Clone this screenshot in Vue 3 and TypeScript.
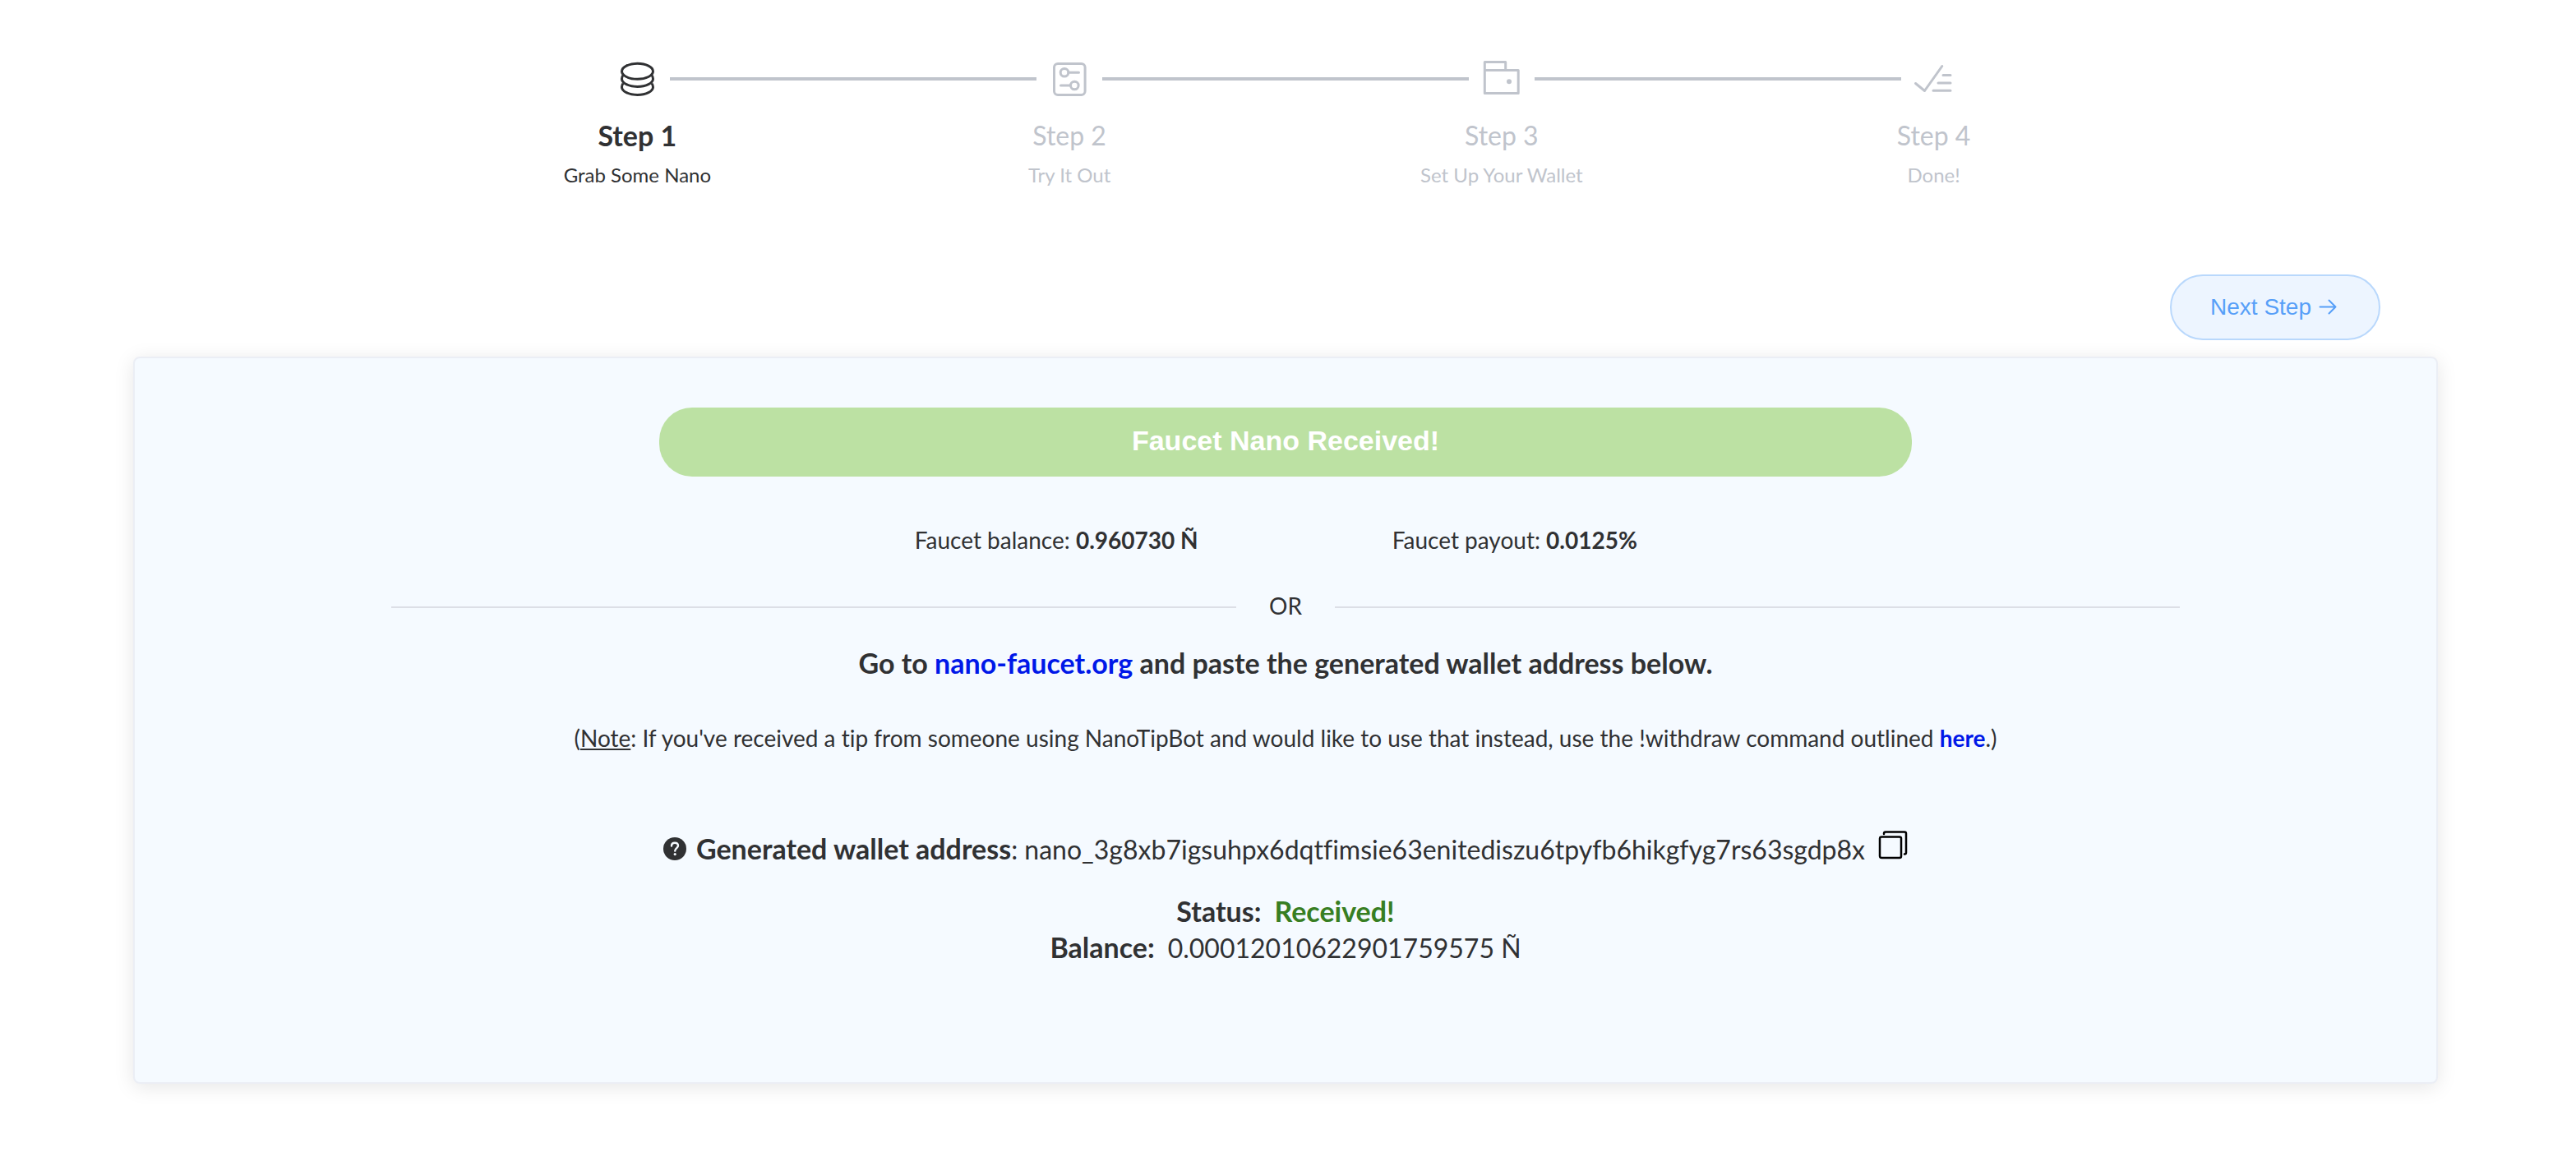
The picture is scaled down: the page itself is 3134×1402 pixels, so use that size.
<script setup lang="ts">
import { ref } from 'vue'

type IconName = 'coin' | 'operation' | 'wallet' | 'finished'

interface Step {
  title: string
  description: string
  icon: IconName
}

const steps: Step[] = [
  { title: 'Step 1', description: 'Grab Some Nano', icon: 'coin' },
  { title: 'Step 2', description: 'Try It Out', icon: 'operation' },
  { title: 'Step 3', description: 'Set Up Your Wallet', icon: 'wallet' },
  { title: 'Step 4', description: 'Done!', icon: 'finished' },
]

const activeStep = ref(0)
const address = 'nano_3g8xb7igsuhpx6dqtfimsie63enitediszu6tpyfb6hikgfyg7rs63sgdp8x'

function nextStep(): void {
  activeStep.value = Math.min(activeStep.value + 1, steps.length - 1)
}

function copyAddress(): void {
  navigator.clipboard?.writeText(address)
}
</script>

<template>
  <main class="page">
    <ol class="steps">
      <li v-for="(step, i) in steps" :key="step.title" class="step" :class="{ active: i === activeStep }">
        <div class="step-head">
          <span class="line" :class="{ hidden: i === 0 }"></span>
          <span class="step-icon">
            <svg viewBox="0 0 50 50" width="50" height="50" fill="none" stroke="currentColor" stroke-width="3" aria-hidden="true">
              <g v-if="step.icon === 'coin'">
                <ellipse cx="25.5" cy="15.8" rx="19" ry="9.5" />
                <path d="M8 20.5C7 22 6.500 23.500 6.500 25C6.500 30.200 15 34.500 25.500 34.500S44.500 30.200 44.500 25C44.500 23.500 44 22 43 20.500" />
                <path d="M8 30.500C7 32 6.500 33.500 6.500 35C6.500 40.200 15 44.500 25.500 44.500S44.500 40.200 44.500 35C44.500 33.500 44 32 43 30.500" />
              </g>
              <g v-else-if="step.icon === 'operation'" stroke-linecap="round">
                <rect x="6.500" y="6.500" width="37.600" height="38" rx="4.500" />
                <circle cx="19" cy="17.300" r="4.800" />
                <path d="M24 17.300H36.500M14.500 33H26" />
                <circle cx="31.300" cy="33" r="4.800" />
              </g>
              <g v-else-if="step.icon === 'wallet'" stroke-linejoin="round">
                <path d="M4.300 14.500H45.200V42.500H4.300ZM4.300 14.500V4.500H29.700V14.500" />
                <circle cx="34" cy="28.300" r="3" fill="currentColor" stroke="none" />
              </g>
              <g v-else stroke-linecap="round" stroke-linejoin="round">
                <path d="M2.500 30.500L13.500 39.500L34.800 9.500" />
                <path d="M36 20.500H45M30 30H45M24 39.300H45" />
              </g>
            </svg>
          </span>
          <span class="line" :class="{ hidden: i === steps.length - 1 }"></span>
        </div>
        <div class="step-title">{{ step.title }}</div>
        <div class="step-desc">{{ step.description }}</div>
      </li>
    </ol>

    <div class="actions">
      <button type="button" class="next" @click="nextStep">
        Next Step
        <svg viewBox="0 0 28 28" width="28" height="28" fill="none" stroke="currentColor" stroke-width="2" stroke-linecap="round" stroke-linejoin="round" aria-hidden="true">
          <path d="M4.500 13.500H23.500M15.500 5.500L23.500 13.500L15.500 21.500" />
        </svg>
      </button>
    </div>

    <section class="card">
      <button type="button" class="faucet" disabled>Faucet Nano Received!</button>

      <div class="info">
        <div>Faucet balance: <b>0.960730 Ñ</b></div>
        <div>Faucet payout: <b>0.0125%</b></div>
      </div>

      <div class="divider"><span>OR</span></div>

      <p class="goto">Go to <a href="#nano-faucet">nano-faucet.org</a> and paste the generated wallet address below.</p>

      <p class="note">(<u>Note</u>: If you've received a tip from someone using NanoTipBot and would like to use that instead, use the !withdraw command outlined <a href="#withdraw">here</a>.)</p>

      <div class="wallet">
        <svg class="help" viewBox="0 0 28 28" width="28" height="28" role="img" aria-label="Help">
          <circle cx="14" cy="14" r="14" fill="currentColor" />
          <path d="M10 10.500C10 8 11.600 6.700 14 6.700S18 8.200 18 10.300C18 13 14.200 13.200 14.200 16.500" fill="none" stroke="#f5faff" stroke-width="2.400" stroke-linecap="round" />
          <circle cx="14.200" cy="20.600" r="1.600" fill="#f5faff" />
        </svg>
        <span><b>Generated wallet address</b>: {{ address }}</span>
        <button type="button" class="copy" aria-label="Copy address" @click="copyAddress">
          <svg viewBox="0 0 36 36" width="36" height="36" fill="none" stroke="#000" stroke-width="2.500" stroke-linejoin="round" stroke-linecap="round" aria-hidden="true">
            <rect x="2" y="7.500" width="26" height="25.500" rx="2" />
            <path d="M7 4V3.500Q7 1.500 9 1.500H32Q34 1.500 34 3.500V26.500Q34 28.500 32 28.500" />
          </svg>
        </button>
      </div>

      <dl class="result">
        <div><dt>Status:</dt><dd class="received">Received!</dd></div>
        <div><dt>Balance:</dt><dd>0.00012010622901759575 Ñ</dd></div>
      </dl>
    </section>
  </main>
</template>

<style>
body {
  margin: 0;
  background: #fff;
}
</style>

<style scoped>
.page {
  box-sizing: border-box;
  padding: 72px 168px 80px 162px;
  color: #303133;
  font-family: Lato, "Noto Sans", sans-serif;
  font-size: 32px;
  font-variant-ligatures: none;
}

.steps {
  display: flex;
  width: 75%;
  margin: 0 auto;
  padding: 0;
  list-style: none;
}

.step {
  flex: 1;
  color: #c0c4cc;
  text-align: center;
}

.step.active {
  color: #303133;
}

.step-head {
  display: flex;
  align-items: center;
  height: 48px;
}

.line {
  flex: 1;
  height: 4px;
  background: #c0c4cc;
}

.line.hidden {
  visibility: hidden;
}

.step-icon {
  display: flex;
  justify-content: center;
  width: 80px;
}

.step-title {
  margin-top: 25px;
  line-height: 40px;
}

.active .step-title {
  font-size: 34px;
  font-weight: 700;
}

.step-desc {
  margin-top: 12px;
  font-size: 24px;
  line-height: 32px;
}

.actions {
  display: flex;
  justify-content: flex-end;
  margin: 105px 70px 20px 0;
}

.next {
  display: flex;
  align-items: center;
  gap: 6px;
  box-sizing: border-box;
  height: 80px;
  padding: 0 48px 0 47px;
  border: 2px solid #b9d8fc;
  border-radius: 40px;
  background: #edf5ff;
  color: #579ff8;
  font-family: "Liberation Sans", Arial, sans-serif;
  font-size: 28px;
}

.card {
  display: flex;
  flex-direction: column;
  align-items: center;
  padding: 60px 40px 142px;
  border: 2px solid #ebeef5;
  border-radius: 8px;
  background: #f5faff;
  box-shadow: 0 4px 24px rgba(0, 0, 0, 0.1);
}

.faucet {
  width: 56%;
  height: 84px;
  padding: 0 0 4px;
  border: 0;
  border-radius: 40px;
  background: #bce1a3;
  color: #fff;
  font-family: "Liberation Sans", Arial, sans-serif;
  font-size: 34px;
  font-weight: 700;
}

.info {
  display: flex;
  width: 41%;
  margin-top: 57px;
  font-size: 28px;
  line-height: 40px;
  text-align: center;
}

.info div {
  flex: 1;
}

.divider {
  display: flex;
  align-items: center;
  gap: 40px;
  width: 80%;
  margin-top: 40px;
  font-size: 28px;
  line-height: 40px;
}

.divider span {
  padding-bottom: 4px;
}

.divider::before,
.divider::after {
  content: "";
  flex: 1;
  height: 2px;
  background: #dcdfe6;
}

p {
  margin: 0;
}

a {
  color: #0018e8;
  font-weight: 700;
  text-decoration: none;
}

.goto {
  margin-top: 26px;
  font-size: 34px;
  font-weight: 700;
  line-height: 40px;
}

.note {
  margin-top: 51px;
  font-size: 28px;
  line-height: 40px;
}

.wallet {
  display: flex;
  align-items: center;
  height: 44px;
  margin-top: 93px;
  line-height: 44px;
}

.wallet b {
  font-size: 34px;
}

.help {
  margin-right: 12px;
}

.copy {
  display: flex;
  align-self: flex-start;
  margin-left: 16px;
  padding: 0;
  border: 0;
  background: none;
}

.result {
  margin: 32px 0 0;
  line-height: 44px;
}

.result div {
  display: flex;
  justify-content: center;
  align-items: baseline;
  gap: 16px;
  height: 44px;
}

dt {
  font-size: 34px;
  font-weight: 700;
}

dd {
  margin: 0;
}

.received {
  color: #377e22;
  font-size: 34px;
  font-weight: 700;
}
</style>
